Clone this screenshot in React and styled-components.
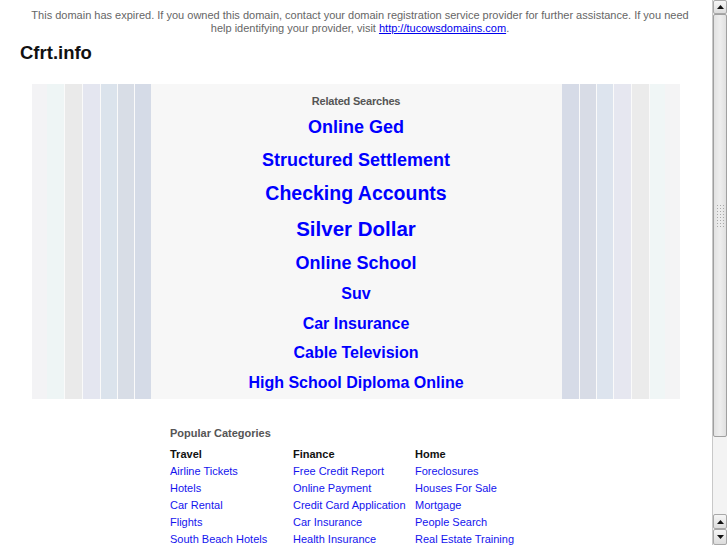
import React from "react";
import styled, { createGlobalStyle } from "styled-components";

const GlobalStyle = createGlobalStyle`
  html, body {
    margin: 0;
    padding: 0;
    overflow: hidden;
    background: #ffffff;
  }
  body {
    font-family: "Liberation Sans", Arial, Helvetica, sans-serif;
  }
`;

const Window = styled.div`
  display: flex;
  width: 727px;
  height: 545px;
  overflow: hidden;
`;

const Page = styled.div`
  flex: 1;
  padding: 9px 8px 0 8px;
  overflow: hidden;
`;

const Notice = styled.p`
  margin: 0;
  padding: 0 10px 0 18px;
  font-size: 11px;
  line-height: 13px;
  color: #666;
  text-align: center;
`;

const NoticeLink = styled.a`
  color: #0000ee;
  text-decoration: underline;
`;

const Title = styled.h1`
  margin: 7px 0 0 12px;
  font-size: 18.5px;
  line-height: 21px;
  font-weight: bold;
  color: #111;
`;

// stripe colours across the related-search panel, [width, colour]
const stripes = [
  [15, "#f3f3f5"],
  [17, "#eef5f5"],
  [1, "#fafafa"],
  [17, "#eaeaea"],
  [1, "#fafafa"],
  [17, "#e4e6f0"],
  [1, "#fafafa"],
  [16, "#dbe3ec"],
  [1, "#fafafa"],
  [16, "#d8dde6"],
  [1, "#fafafa"],
  [16, "#d5dbe7"],
  [411, "#f7f7f7"],
  [17, "#d6dbe7"],
  [1, "#fafafa"],
  [16, "#d8dce6"],
  [1, "#fafafa"],
  [16, "#dde4ee"],
  [1, "#fafafa"],
  [17, "#e6e7f0"],
  [1, "#fafafa"],
  [17, "#ebebeb"],
  [1, "#fafafa"],
  [15, "#f0f6f6"],
  [15, "#f4f4f5"],
];

const stripeGradient = (() => {
  let pos = 0;
  const stops = [];
  stripes.forEach(([w, c]) => {
    stops.push(`${c} ${pos}px`, `${c} ${pos + w}px`);
    pos += w;
  });
  return `linear-gradient(to right, ${stops.join(", ")})`;
})();

const SearchPanel = styled.div`
  margin: 21px 24px 0 24px;
  height: 315px;
  box-sizing: border-box;
  padding-top: 11px;
  background: ${stripeGradient};
  display: flex;
  flex-direction: column;
  align-items: center;
  gap: 7.25px;
`;

const PanelHeading = styled.div`
  font-size: 11px;
  line-height: 13px;
  font-weight: bold;
  color: #555;
  letter-spacing: -0.2px;
`;

const SearchLink = styled.a`
  font-size: ${(props) => props.size}px;
  line-height: 1.4;
  font-weight: bold;
  color: #0000ff;
  text-decoration: none;
`;

const Categories = styled.div`
  width: 372px;
  margin: 28px auto 0 auto;
`;

const CategoriesHeading = styled.div`
  font-size: 11px;
  line-height: 13px;
  font-weight: bold;
  color: #555;
  margin-bottom: 6px;
`;

const Columns = styled.div`
  display: grid;
  grid-template-columns: 123px 122px 1fr;
`;

const Column = styled.div`
  display: flex;
  flex-direction: column;
  font-size: 11px;
  line-height: 17px;
`;

const ColumnTitle = styled.div`
  font-weight: bold;
  color: #111;
`;

const CategoryLink = styled.a`
  color: #1414ee;
  text-decoration: none;
  white-space: nowrap;
`;

const Scrollbar = styled.div`
  width: 15px;
  height: 545px;
  display: flex;
  flex-direction: column;
  background: #f1f1f1;
  border-left: 1px solid #c8c8c8;
  box-sizing: border-box;
`;

const ScrollButton = styled.div`
  height: ${(props) => props.h}px;
  flex: none;
  box-sizing: border-box;
  border: 1px solid #a8a8a8;
  border-radius: 2px;
  background: linear-gradient(to bottom, #f6f6f6, #dcdcdc);
  display: flex;
  align-items: center;
  justify-content: center;
`;

const Thumb = styled.div`
  height: 423px;
  flex: none;
  box-sizing: border-box;
  border: 1px solid #a0a0a0;
  border-radius: 2px;
  background: linear-gradient(to right, #e2e2e2, #eeeeee 50%, #e0e0e0);
  display: flex;
  align-items: center;
  justify-content: center;
  padding-bottom: 20px;
`;

const Grip = styled.div`
  width: 8px;
  height: 24px;
  background-image: radial-gradient(circle, #a9a9a9 0.8px, transparent 1px);
  background-size: 3px 3px;
`;

const Track = styled.div`
  flex: 1;
  background: #f3f3f3;
`;

const Arrow = ({ down }) => (
  <svg width="7" height="4" viewBox="0 0 7 4">
    {down ? (
      <polygon points="0,0 7,0 3.5,4" fill="#111" />
    ) : (
      <polygon points="0,4 7,4 3.5,0" fill="#111" />
    )}
  </svg>
);

const searches = [
  { text: "Online Ged", size: 18 },
  { text: "Structured Settlement", size: 18 },
  { text: "Checking Accounts", size: 19.5 },
  { text: "Silver Dollar", size: 20.5 },
  { text: "Online School", size: 18 },
  { text: "Suv", size: 16 },
  { text: "Car Insurance", size: 16 },
  { text: "Cable Television", size: 16 },
  { text: "High School Diploma Online", size: 16 },
];

const categories = [
  {
    name: "Travel",
    links: ["Airline Tickets", "Hotels", "Car Rental", "Flights", "South Beach Hotels"],
  },
  {
    name: "Finance",
    links: [
      "Free Credit Report",
      "Online Payment",
      "Credit Card Application",
      "Car Insurance",
      "Health Insurance",
    ],
  },
  {
    name: "Home",
    links: ["Foreclosures", "Houses For Sale", "Mortgage", "People Search", "Real Estate Training"],
  },
];

const App = () => {
  return (
    <Window>
      <GlobalStyle />
      <Page>
        <Notice>
          This domain has expired. If you owned this domain, contact your domain
          registration service provider for further assistance. If you need help
          identifying your provider, visit{" "}
          <NoticeLink href="#">http://tucowsdomains.com</NoticeLink>.
        </Notice>
        <Title>Cfrt.info</Title>
        <SearchPanel>
          <PanelHeading>Related Searches</PanelHeading>
          {searches.map((s) => (
            <SearchLink href="#" size={s.size} key={s.text}>
              {s.text}
            </SearchLink>
          ))}
        </SearchPanel>
        <Categories>
          <CategoriesHeading>Popular Categories</CategoriesHeading>
          <Columns>
            {categories.map((cat) => (
              <Column key={cat.name}>
                <ColumnTitle>{cat.name}</ColumnTitle>
                {cat.links.map((l) => (
                  <CategoryLink href="#" key={l}>
                    {l}
                  </CategoryLink>
                ))}
              </Column>
            ))}
          </Columns>
        </Categories>
      </Page>
      <Scrollbar>
        <ScrollButton h={14}>
          <Arrow />
        </ScrollButton>
        <Thumb>
          <Grip />
        </Thumb>
        <Track />
        <ScrollButton h={15}>
          <Arrow />
        </ScrollButton>
        <ScrollButton h={16}>
          <Arrow down />
        </ScrollButton>
      </Scrollbar>
    </Window>
  );
};

export default App;
